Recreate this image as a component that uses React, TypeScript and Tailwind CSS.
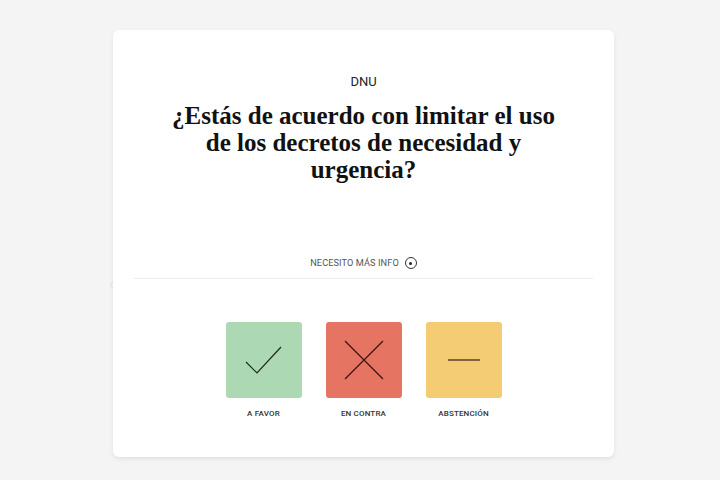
import React from "react";

const options = [
  { label: "A FAVOR", bg: "bg-[#acd8b4]", icon: "check" },
  { label: "EN CONTRA", bg: "bg-[#e67462]", icon: "cross" },
  { label: "ABSTENCIÓN", bg: "bg-[#f4cc73]", icon: "dash" },
];

const VoteIcon: React.FC<{ kind: string }> = ({ kind }) => {
  if (kind === "check") {
    return (
      <svg width="40" height="40" viewBox="0 0 40 40" fill="none" stroke="#1d2a1f" strokeWidth="1.2">
        <path d="M2 22 L13 33 L37 7" />
      </svg>
    );
  }
  if (kind === "cross") {
    return (
      <svg width="40" height="40" viewBox="0 0 40 40" fill="none" stroke="#3a1410" strokeWidth="1.2">
        <path d="M1 1 L39 39 M39 1 L1 39" />
      </svg>
    );
  }
  return (
    <svg width="32" height="4" viewBox="0 0 32 4" fill="none" stroke="#2a2212" strokeWidth="1.2">
      <path d="M0 2 H32" />
    </svg>
  );
};

export default function App() {
  return (
    <div className="w-[720px] h-[480px] bg-[#f4f4f4] pt-[30px] relative" style={{ fontFamily: "Roboto, 'Liberation Sans', sans-serif" }}>
      <div className="relative ml-[113px] w-[501px] h-[427px] bg-white rounded-md shadow-[0_2px_4px_rgba(0,0,0,0.08)] flex flex-col items-center">
        <div className="absolute left-[-4px] top-[246px] text-[#e2e2e2] text-[16px] leading-none">‹</div>
        <div className="mt-[44px] text-[13px] leading-[16px] text-[#222]">DNU</div>
        <h1
          className="mt-[12px] w-[400px] text-center text-[25px] leading-[27px] font-bold text-[#111]"
          style={{ fontFamily: "'Liberation Serif', 'DejaVu Serif', serif" }}
        >
          ¿Estás de acuerdo con limitar el uso
          <br />
          de los decretos de necesidad y
          <br />
          urgencia?
        </h1>
        <div className="mt-[74px] flex items-center gap-[6px] text-[9.2px] leading-[12px] text-[#555] tracking-[0.01em]">
          <span>NECESITO MÁS INFO</span>
          <span className="w-[12px] h-[12px] rounded-full border border-[#333] flex items-center justify-center">
            <span className="w-[3px] h-[3px] rounded-full bg-[#222]" />
          </span>
        </div>
        <div className="mt-[9px] w-[459px] h-px bg-[#ececec]" />
        <div className="mt-[43px] flex gap-[24px]">
          {options.map((o) => (
            <div key={o.label} className="flex flex-col items-center">
              <div className={`w-[76px] h-[76px] rounded-[3px] ${o.bg} flex items-center justify-center`}>
                <VoteIcon kind={o.icon} />
              </div>
              <div className="mt-[11px] text-[8px] leading-[10px] font-medium text-[#333] tracking-[0.02em]">{o.label}</div>
            </div>
          ))}
        </div>
      </div>
    </div>
  );
}
